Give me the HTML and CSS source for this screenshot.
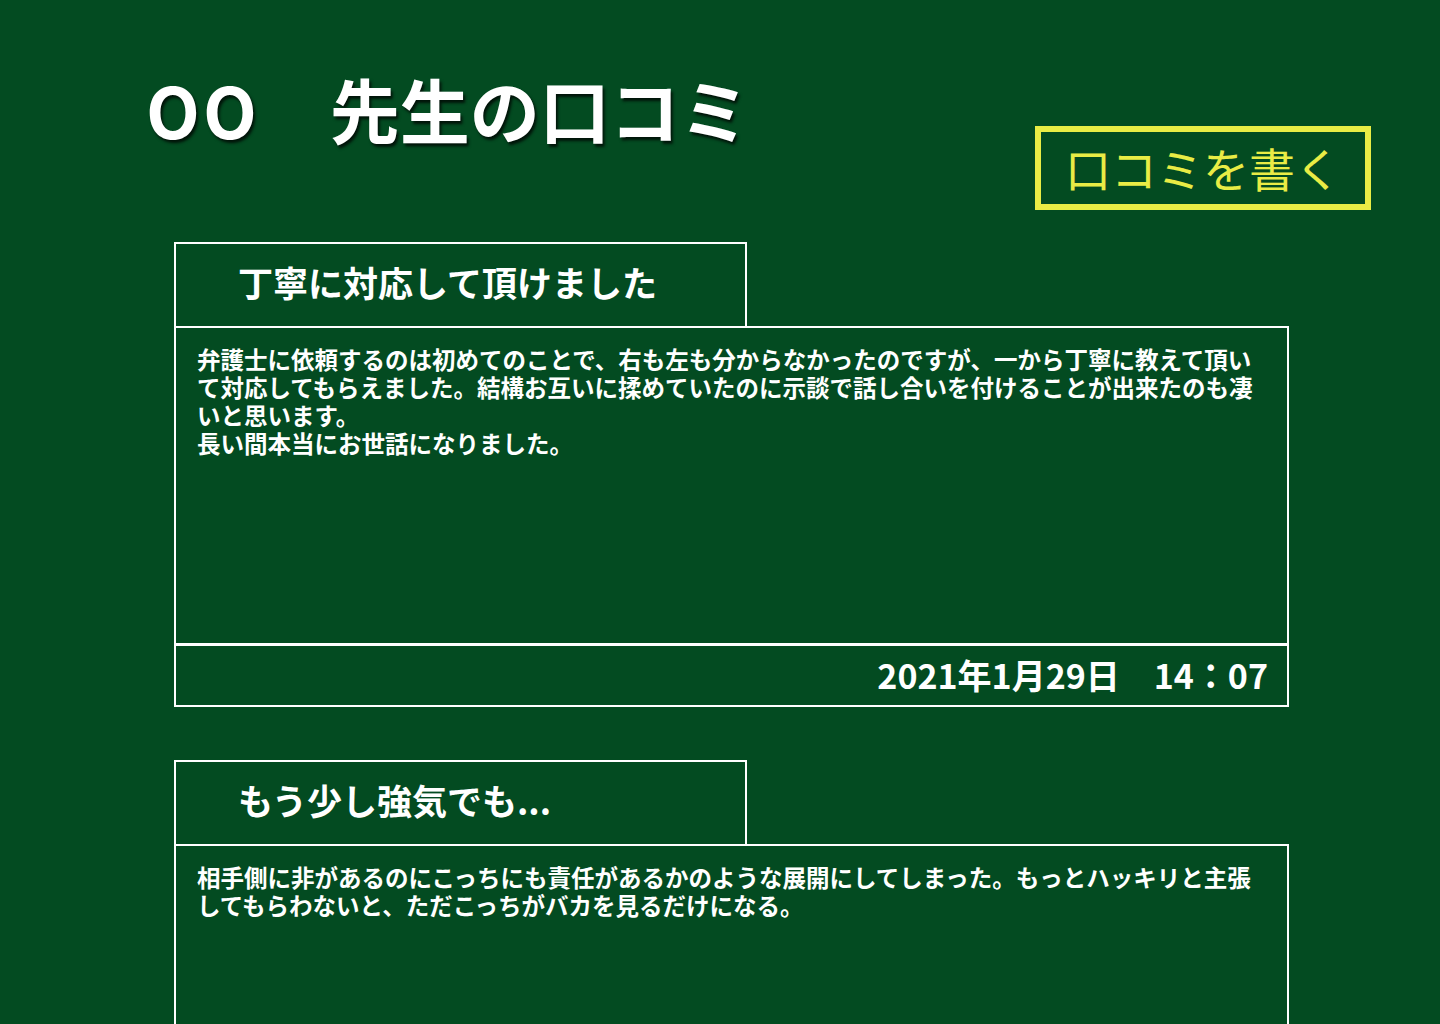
FILE: index.html
```html
<!DOCTYPE html>
<html lang="ja">
<head>
<meta charset="utf-8">
<title>OO 先生の口コミ</title>
<link rel="stylesheet" href="styles.css">
</head>
<body>
<div class="page">
  <header class="header">
    <h1 class="page-title"><span class="latin">OO</span>　先生の口コミ</h1>
    <a class="write-btn" href="#">口コミを書く</a>
  </header>
  <main class="reviews">
    <section class="review">
      <h2 class="review-title">丁寧に対応して頂けました</h2>
      <div class="review-body">弁護士に依頼するのは初めてのことで、右も左も分からなかったのですが、一から丁寧に教えて頂いて対応してもらえました。結構お互いに揉めていたのに示談で話し合いを付けることが出来たのも凄いと思います。<br>長い間本当にお世話になりました。</div>
      <div class="review-date">2021年1月29日　14：07</div>
    </section>
    <section class="review">
      <h2 class="review-title">もう少し強気でも...</h2>
      <div class="review-body">相手側に非があるのにこっちにも責任があるかのような展開にしてしまった。もっとハッキリと主張してもらわないと、ただこっちがバカを見るだけになる。</div>
      <div class="review-date">2021年1月28日　10：12</div>
    </section>
  </main>
</div>
</body>
</html>
```
FILE: styles.css
```css
html, body {
  margin: 0;
  padding: 0;
  overflow: hidden;
}
body {
  background: #034b21;
  color: #ffffff;
  font-family: "Noto Sans CJK JP", "Noto Sans", sans-serif;
  width: 1440px;
  height: 1024px;
}
.page {
  padding: 74px 69px 0 146px;
}
.header {
  display: flex;
  justify-content: space-between;
  align-items: flex-start;
  height: 168px;
}
.page-title {
  margin: 0;
  font-size: 70px;
  line-height: 70px;
  font-weight: 700;
  text-shadow: 2px 3px 3px rgba(0, 0, 0, 0.75);
}
.page-title .latin {
  letter-spacing: 3px;
}
.write-btn {
  margin-top: 52px;
  box-sizing: border-box;
  width: 336px;
  height: 84px;
  border: 6px solid #e9ec45;
  display: flex;
  align-items: center;
  justify-content: center;
  padding-bottom: 2px;
  color: #e9ec45;
  font-size: 46px;
  font-weight: 400;
  text-decoration: none;
}
.reviews {
  margin-left: 28px;
  width: 1115px;
  display: flex;
  flex-direction: column;
  gap: 53px;
}
.review {
  display: flex;
  flex-direction: column;
}
.review-title {
  margin: 0;
  box-sizing: border-box;
  width: 573px;
  height: 84px;
  border: 2px solid #fff;
  border-bottom: 0;
  padding: 0 0 8px 62px;
  display: flex;
  align-items: center;
  font-size: 35px;
  font-weight: 700;
}
.review-body {
  box-sizing: border-box;
  height: 319px;
  border: 2px solid #fff;
  padding: 17px 20px 0 21px;
  font-size: 23.5px;
  line-height: 28px;
  font-weight: 700;
}
.review-date {
  box-sizing: border-box;
  height: 62px;
  border: 2px solid #fff;
  border-top: 1px solid #fff;
  display: flex;
  align-items: center;
  justify-content: flex-end;
  padding: 0 19px 2px 0;
  font-size: 34px;
  font-weight: 700;
}
```
